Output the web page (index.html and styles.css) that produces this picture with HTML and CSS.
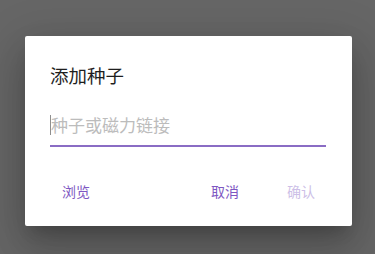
FILE: index.html
```html
<!DOCTYPE html>
<html lang="zh-CN">
<head>
    <meta charset="UTF-8" />
    <title>添加种子</title>
    <link rel="stylesheet" href="styles.css">
</head>
<body>

    <div class="dialogo">
        <div class="titulo">添加种子</div>

        <div class="campo">
            <span class="cursor"></span>
            <span class="placeholder">种子或磁力链接</span>
        </div>

        <div class="botones">
            <button class="boton">浏览</button>
            <button class="boton espacio">取消</button>
            <button class="boton desactivado">确认</button>
        </div>
    </div>

</body>
</html>
```

FILE: styles.css
```css
body {
    margin: 0;
    height: 254px;
    background-color: #666666;
    font-family: "Noto Sans CJK SC", "Noto Sans", sans-serif;
    overflow: hidden;
}

.dialogo {
    box-sizing: border-box;
    width: 327px;
    height: 190px;
    margin: 36px 0 0 25px;
    padding: 27px 26px 0 25px;
    background: #ffffff;
    border-radius: 2px;
    box-shadow: 0 11px 15px -7px rgba(0,0,0,0.2),
                0 24px 38px 3px rgba(0,0,0,0.14),
                0 9px 46px 8px rgba(0,0,0,0.12);
}

.titulo {
    font-size: 18.5px;
    line-height: 24px;
    color: #1e1e1e;
}

.campo {
    display: flex;
    align-items: center;
    height: 40px;
    margin-top: 18px;
    border-bottom: 2px solid #8a6cc4;
}

.cursor {
    width: 1px;
    height: 20px;
    background: #8f8f8f;
}

.placeholder {
    font-size: 17px;
    line-height: 24px;
    color: #bcbcbc;
}

.botones {
    display: flex;
    gap: 12px;
    margin: 26px -7px 0 -6px;
}

.boton {
    min-width: 64px;
    height: 36px;
    padding: 0 8px;
    border: none;
    background: none;
    font-family: inherit;
    font-size: 14px;
    color: #7e57c2;
}

.boton.espacio {
    margin-left: auto;
}

.boton.desactivado {
    color: #cdbfe7;
}
```
